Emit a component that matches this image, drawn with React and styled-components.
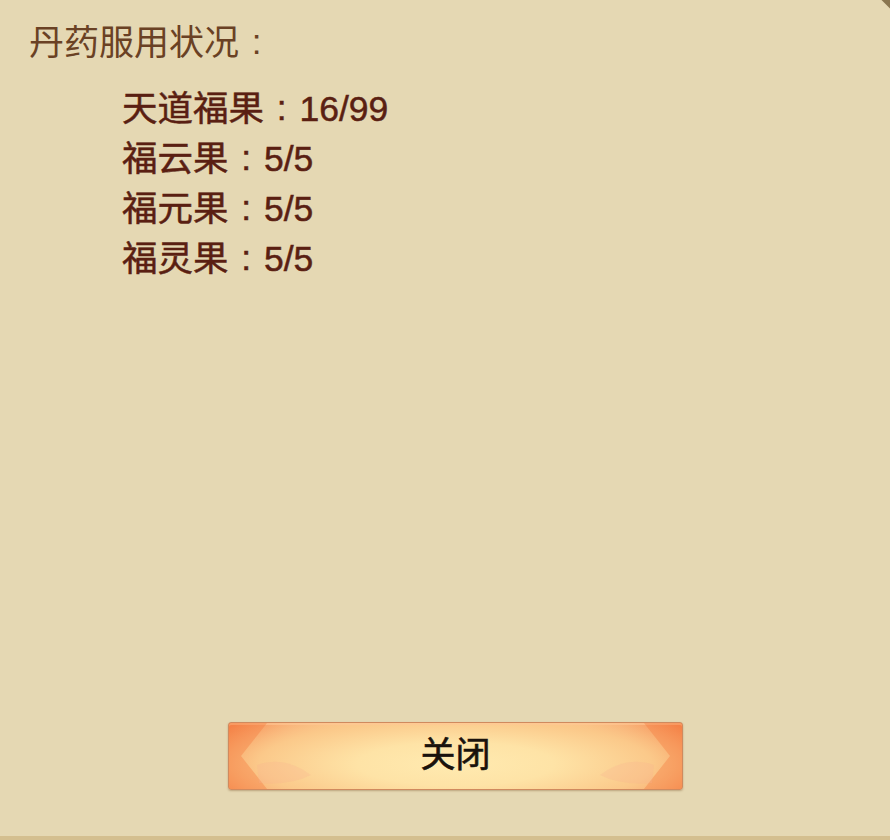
import React from 'react'
import styled, { createGlobalStyle } from 'styled-components'

const GlobalStyle = createGlobalStyle`
    html, body {
        margin: 0;
        padding: 0;
        background: #e5d8b3;
    }
    * { box-sizing: border-box; }
`

const FONT = `"Liberation Sans", "Noto Sans CJK SC", sans-serif`

const Panel = styled.div`
    position: relative;
    width: 890px;
    height: 840px;
    background: #e5d8b3;
    border-bottom: 4px solid #d4bf8f;
    display: flex;
    flex-direction: column;
    font-family: ${FONT};
    overflow: hidden;
`
const Title = styled.h1`
    margin: 0;
    padding: 19px 0 0 29px;
    font-size: 35px;
    line-height: 48px;
    font-weight: 400;
    color: #6a4124;
`
// full-width colon, dots centred in a 1em cell
const Colon = styled.span`
    display: inline-block;
    width: 1em;
    text-align: center;
    line-height: 1;
    position: relative;
    top: -1px;
`
const List = styled.ul`
    list-style: none;
    margin: 0;
    padding: 17px 0 0 122px;
    display: flex;
    flex-direction: column;
`
const Item = styled.li`
    font-size: 35.5px;
    line-height: 50px;
    height: 50px;
    color: #5a1f12;
    font-weight: 400;
    -webkit-text-stroke: 0.5px #5a1f12;
`
const Footer = styled.div`
    margin-top: auto;
    padding: 0 0 46px 228px;
    display: flex;
`
const CloseButton = styled.button`
    position: relative;
    width: 455px;
    height: 68px;
    border: 1px solid #d08a5e;
    border-radius: 3px;
    background:
        radial-gradient(ellipse 62% 95% at 50% 62%, #ffeab0 0%, #fee3a6 35%, #fbc98a 70%, rgba(248,160,100,0) 100%),
        linear-gradient(90deg, #f5844a 0%, #f7a46e 14%, #fcd59a 40%, #fcd59a 60%, #f7a46e 86%, #f5844a 100%);
    box-shadow: 0 1px 2px rgba(110, 70, 30, 0.35), inset 0 2px 0 rgba(255, 200, 150, 0.6);
    font-family: ${FONT};
    font-size: 35px;
    color: #1a120c;
    font-weight: 400;
    -webkit-text-stroke: 0.6px #1a120c;
    cursor: pointer;
    overflow: hidden;
`
const Ornament = styled.svg`
    position: absolute;
    top: 0;
    ${({ side }) => side === 'left' ? 'left: 0;' : 'right: 0; transform: scaleX(-1);'}
    width: 110px;
    height: 66px;
    pointer-events: none;
`
const Label = styled.span`
    position: relative;
    top: -5px;
`
const Corner = styled.div`
    position: absolute;
    top: -6px;
    right: -6px;
    width: 12px;
    height: 12px;
    background: #8a7650;
    transform: rotate(45deg);
`

const items = [
    ['天道福果', '16/99'],
    ['福云果', '5/5'],
    ['福元果', '5/5'],
    ['福灵果', '5/5'],
]

const Deco = ({ side }) => (
    <Ornament side={side} viewBox="0 0 110 66">
        <path d="M0 0 H38 L12 33 L38 66 H0 Z" fill="#f47d42" opacity="0.4" />
        <path d="M28 42 Q55 32 82 52 Q60 63 30 60 Z" fill="#f6b090" opacity="0.25" />
    </Ornament>
)

export default function App() {
    return (
        <>
            <GlobalStyle />
            <Panel>
                <Corner />
                <Title>丹药服用状况<Colon>:</Colon></Title>
                <List>
                    {items.map(([name, value]) => (
                        <Item key={name}>{name}<Colon>:</Colon>{value}</Item>
                    ))}
                </List>
                <Footer>
                    <CloseButton>
                        <Deco side="left" />
                        <Deco side="right" />
                        <Label>关闭</Label>
                    </CloseButton>
                </Footer>
            </Panel>
        </>
    )
}
